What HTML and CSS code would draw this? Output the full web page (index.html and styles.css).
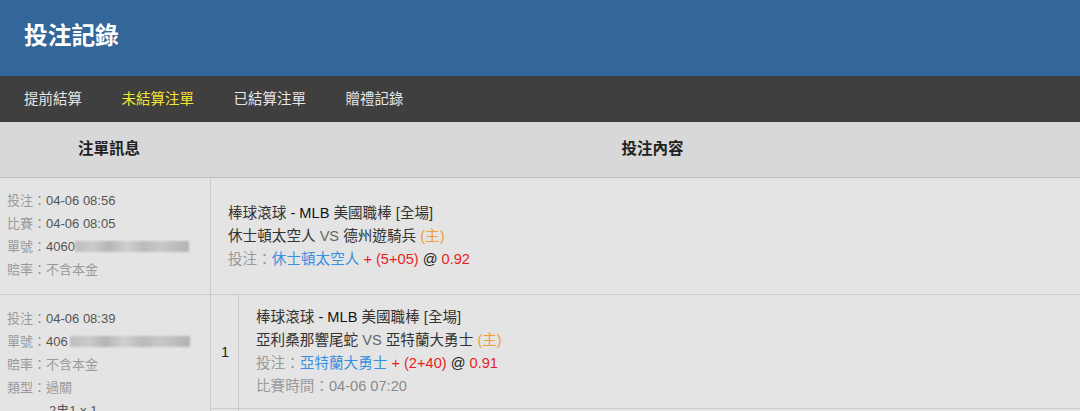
FILE: index.html
```html
<!DOCTYPE html>
<html lang="zh-Hant">
<head>
<meta charset="utf-8">
<title>投注記錄</title>
<link rel="stylesheet" href="styles.css">
</head>
<body>
<div class="app">
  <header class="top">
    <h1 class="title">投注記錄</h1>
  </header>
  <nav class="tabs">
    <a class="tab">提前結算</a>
    <a class="tab active">未結算注單</a>
    <a class="tab">已結算注單</a>
    <a class="tab">贈禮記錄</a>
  </nav>
  <div class="thead">
    <div class="th th-info">注單訊息</div>
    <div class="th th-content">投注內容</div>
  </div>

  <div class="row row-single">
    <div class="info">
      <div class="line"><span class="lbl">投注：</span><span class="val">04-06 08:56</span></div>
      <div class="line"><span class="lbl">比賽：</span><span class="val">04-06 08:05</span></div>
      <div class="line"><span class="lbl">單號：</span><span class="val">4060</span><span class="blur"></span></div>
      <div class="line"><span class="lbl">賠率：</span><span class="lbl">不含本金</span></div>
    </div>
    <div class="content single">
      <div class="bet">
        <div class="line dark">棒球滾球 <span class="latin">- MLB</span> 美國職棒 [全場]</div>
        <div class="line dark">休士頓太空人 <span class="vs">VS</span> 德州遊騎兵 <span class="home">(主)</span></div>
        <div class="line"><span class="lbl">投注：</span><span class="team">休士頓太空人</span> <span class="red">+ (5+05)</span> <span class="at">@</span> <span class="red">0.92</span></div>
      </div>
    </div>
  </div>

  <div class="row row-parlay">
    <div class="info info-parlay">
      <div class="line"><span class="lbl">投注：</span><span class="val">04-06 08:39</span></div>
      <div class="line"><span class="lbl">單號：</span><span class="val">406</span><span class="blur blur2"></span></div>
      <div class="line"><span class="lbl">賠率：</span><span class="lbl">不含本金</span></div>
      <div class="line"><span class="lbl">類型：</span><span class="lbl">過關</span></div>
      <div class="line indent"><span class="val">2串1 x 1</span></div>
    </div>
    <div class="content legs">
      <div class="leg">
        <div class="idx">1</div>
        <div class="bet">
          <div class="line dark">棒球滾球 <span class="latin">- MLB</span> 美國職棒 [全場]</div>
          <div class="line dark">亞利桑那響尾蛇 <span class="vs">VS</span> 亞特蘭大勇士 <span class="home">(主)</span></div>
          <div class="line"><span class="lbl">投注：</span><span class="team">亞特蘭大勇士</span> <span class="red">+ (2+40)</span> <span class="at">@</span> <span class="red">0.91</span></div>
          <div class="line"><span class="lbl">比賽時間：</span><span class="lbl2">04-06 07:20</span></div>
        </div>
      </div>
      <div class="leg">
        <div class="idx">2</div>
        <div class="bet">
          <div class="line dark">棒球滾球 <span class="latin">- MLB</span> 美國職棒 [全場]</div>
          <div class="line dark">紐約大都會 <span class="vs">VS</span> 邁阿密馬林魚 <span class="home">(主)</span></div>
          <div class="line"><span class="lbl">投注：</span><span class="team">紐約大都會</span> <span class="red">+ (1+50)</span> <span class="at">@</span> <span class="red">0.95</span></div>
          <div class="line"><span class="lbl">比賽時間：</span><span class="lbl2">04-06 07:10</span></div>
        </div>
      </div>
    </div>
  </div>
</div>
</body>
</html>
```

FILE: styles.css
```css
* { box-sizing: border-box; }
html, body {
  margin: 0;
  padding: 0;
  overflow: hidden;
  background: #e4e4e4;
}
body {
  font-family: "Liberation Sans", "Noto Sans CJK TC", Arial, sans-serif;
  color: #333;
}
.app { width: 1080px; }

.top {
  height: 76px;
  background: #336699;
  display: flex;
  align-items: center;
  padding-left: 24px;
}
.title {
  margin: 0;
  margin-top: -4px;
  color: #fff;
  font-size: 23.7px;
  font-weight: bold;
  line-height: 30px;
}

.tabs {
  height: 46px;
  background: #3f3f3f;
  display: flex;
  align-items: center;
  padding-left: 24px;
  gap: 39.5px;
}
.tab {
  color: #e6e6e6;
  font-size: 14.5px;
  line-height: 20px;
}
.tab.active { color: #f4e531; }

.thead {
  display: grid;
  grid-template-columns: 211px 1fr;
  height: 56px;
  background: #d8d8d8;
  border-bottom: 1px solid #bdbdbd;
  align-items: center;
}
.th {
  font-size: 15.5px;
  font-weight: bold;
  color: #222;
  text-align: center;
  line-height: 20px;
  padding-bottom: 2px;
}
.th-info { padding-left: 7px; }
.th-content { padding-left: 14px; }

.row {
  display: grid;
  grid-template-columns: 211px 1fr;
  border-bottom: 1px solid #cbcbcb;
  background: #e4e4e4;
}
.row-single { min-height: 117px; }

.info {
  border-right: 1px solid #cbcbcb;
  padding: 11px 0 10px 7px;
  font-size: 13px;
}
.info .line {
  line-height: 23px;
  height: 23px;
  display: flex;
  align-items: center;
  white-space: nowrap;
}
.info-parlay { padding-top: 12px; }
.info .indent { padding-left: 42px; }

.lbl { color: #9a9a9a; }
.lbl2 { color: #8a8a8a; }
.val { color: #555; }

.blur {
  display: inline-block;
  width: 114px;
  height: 11px;
  background: linear-gradient(90deg, #bdbdbd 0%, #cbcbcb 15%, #b5b5b5 30%, #d0d0d0 45%, #bababa 60%, #c8c8c8 75%, #b3b3b3 100%);
  filter: blur(1px);
}
.blur2 { width: 120px; margin-left: 2px; }

.content.single {
  display: flex;
  align-items: center;
  padding-left: 17px;
}
.bet { font-size: 14.6px; }
.bet .line {
  line-height: 23px;
  white-space: nowrap;
}
.single .bet { padding-top: 1px; }
.dark { color: #333; }
.latin { color: #111; }
.vs { color: #666; }
.home { color: #f0a038; }
.team { color: #3a8fe0; }
.red { color: #e81e1e; }
.at { color: #222; }

.legs {
  display: flex;
  flex-direction: column;
}
.leg {
  display: flex;
  border-bottom: 1px solid #cbcbcb;
  min-height: 114px;
}
.idx {
  width: 28px;
  border-right: 1px solid #cbcbcb;
  display: flex;
  align-items: center;
  justify-content: center;
  font-size: 14.6px;
  color: #222;
  padding-left: 1px;
}
.leg .bet {
  display: flex;
  flex-direction: column;
  justify-content: center;
  padding-left: 17px;
}
```
